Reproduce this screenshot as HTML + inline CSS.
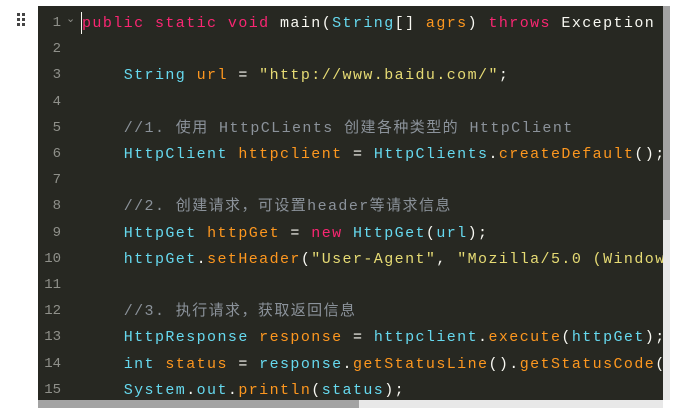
<!DOCTYPE html>
<html><head><meta charset="utf-8"><style>
body{margin:0;width:685px;height:408px;background:#fff;position:relative;overflow:hidden}
.ed{position:absolute;left:38px;top:6px;width:625px;height:394px;background:#272822;overflow:hidden}
.vs{position:absolute;left:663px;top:6px;width:7px;height:394px;background:#e8e8e8}
.vt{position:absolute;left:663px;top:6px;width:7px;height:214px;background:#a3a3a3}
.hs{position:absolute;left:38px;top:400px;width:625px;height:8px;background:#e8e8e8}
.ht{position:absolute;left:38px;top:400px;width:321px;height:8px;background:#a3a3a3}
.ln{position:absolute;left:0;top:4px;width:23px;text-align:right;font:14px "Liberation Mono","DejaVu Sans Mono",monospace;color:#8f908a;line-height:26.2px;white-space:pre}
.code{position:absolute;left:44px;top:5px;font:15px "Liberation Mono","Noto Sans CJK SC",monospace;letter-spacing:1.42px;line-height:26.2px;color:#f8f8f2;white-space:pre}
.k{color:#f92672}.t{color:#66d9ef}.v{color:#fd971f}.s{color:#e6db74}.c{color:#8b929a}
.dot{position:absolute;width:3px;height:3px;background:#444}
</style></head><body>
<div class="dot" style="left:17px;top:13px"></div><div class="dot" style="left:22px;top:13px"></div>
<div class="dot" style="left:17px;top:18px"></div><div class="dot" style="left:22px;top:18px"></div>
<div class="dot" style="left:17px;top:23px"></div><div class="dot" style="left:22px;top:23px"></div>
<div class="ed">
<div class="ln">1
2
3
4
5
6
7
8
9
10
11
12
13
14
15</div>
<div style="position:absolute;left:28px;top:6px;color:#8f908a;font:11px 'DejaVu Sans',sans-serif">⌄</div>
<div style="position:absolute;left:43px;top:6px;width:1px;height:22px;background:#f8f8f0"></div>
<div class="code"><span class="k">public static void</span> main(<span class="t">String</span>[] <span class="v">agrs</span>) <span class="k">throws</span> Exception

    <span class="t">String</span> <span class="v">url</span> = <span class="s">"http://www.baidu.com/"</span>;

    <span class="c">//1. 使用 HttpCLients 创建各种类型的 HttpClient</span>
    <span class="t">HttpClient</span> <span class="v">httpclient</span> = <span class="t">HttpClients</span>.<span class="v">createDefault</span>();

    <span class="c">//2. 创建请求，可设置header等请求信息</span>
    <span class="t">HttpGet</span> <span class="v">httpGet</span> = <span class="k">new</span> <span class="t">HttpGet</span>(<span class="t">url</span>);
    <span class="t">httpGet</span>.<span class="v">setHeader</span>(<span class="s">"User-Agent"</span>, <span class="s">"Mozilla/5.0 (Windows NT 10.0)"</span>);

    <span class="c">//3. 执行请求，获取返回信息</span>
    <span class="t">HttpResponse</span> <span class="v">response</span> = <span class="t">httpclient</span>.<span class="v">execute</span>(<span class="t">httpGet</span>);
    <span class="t">int</span> <span class="v">status</span> = <span class="t">response</span>.<span class="v">getStatusLine</span>().<span class="v">getStatusCode</span>();
    <span class="t">System</span>.<span class="t">out</span>.<span class="v">println</span>(<span class="t">status</span>);</div>
</div>
<div class="vs"></div><div class="vt"></div>
<div class="hs"></div><div class="ht"></div>
</body></html>
